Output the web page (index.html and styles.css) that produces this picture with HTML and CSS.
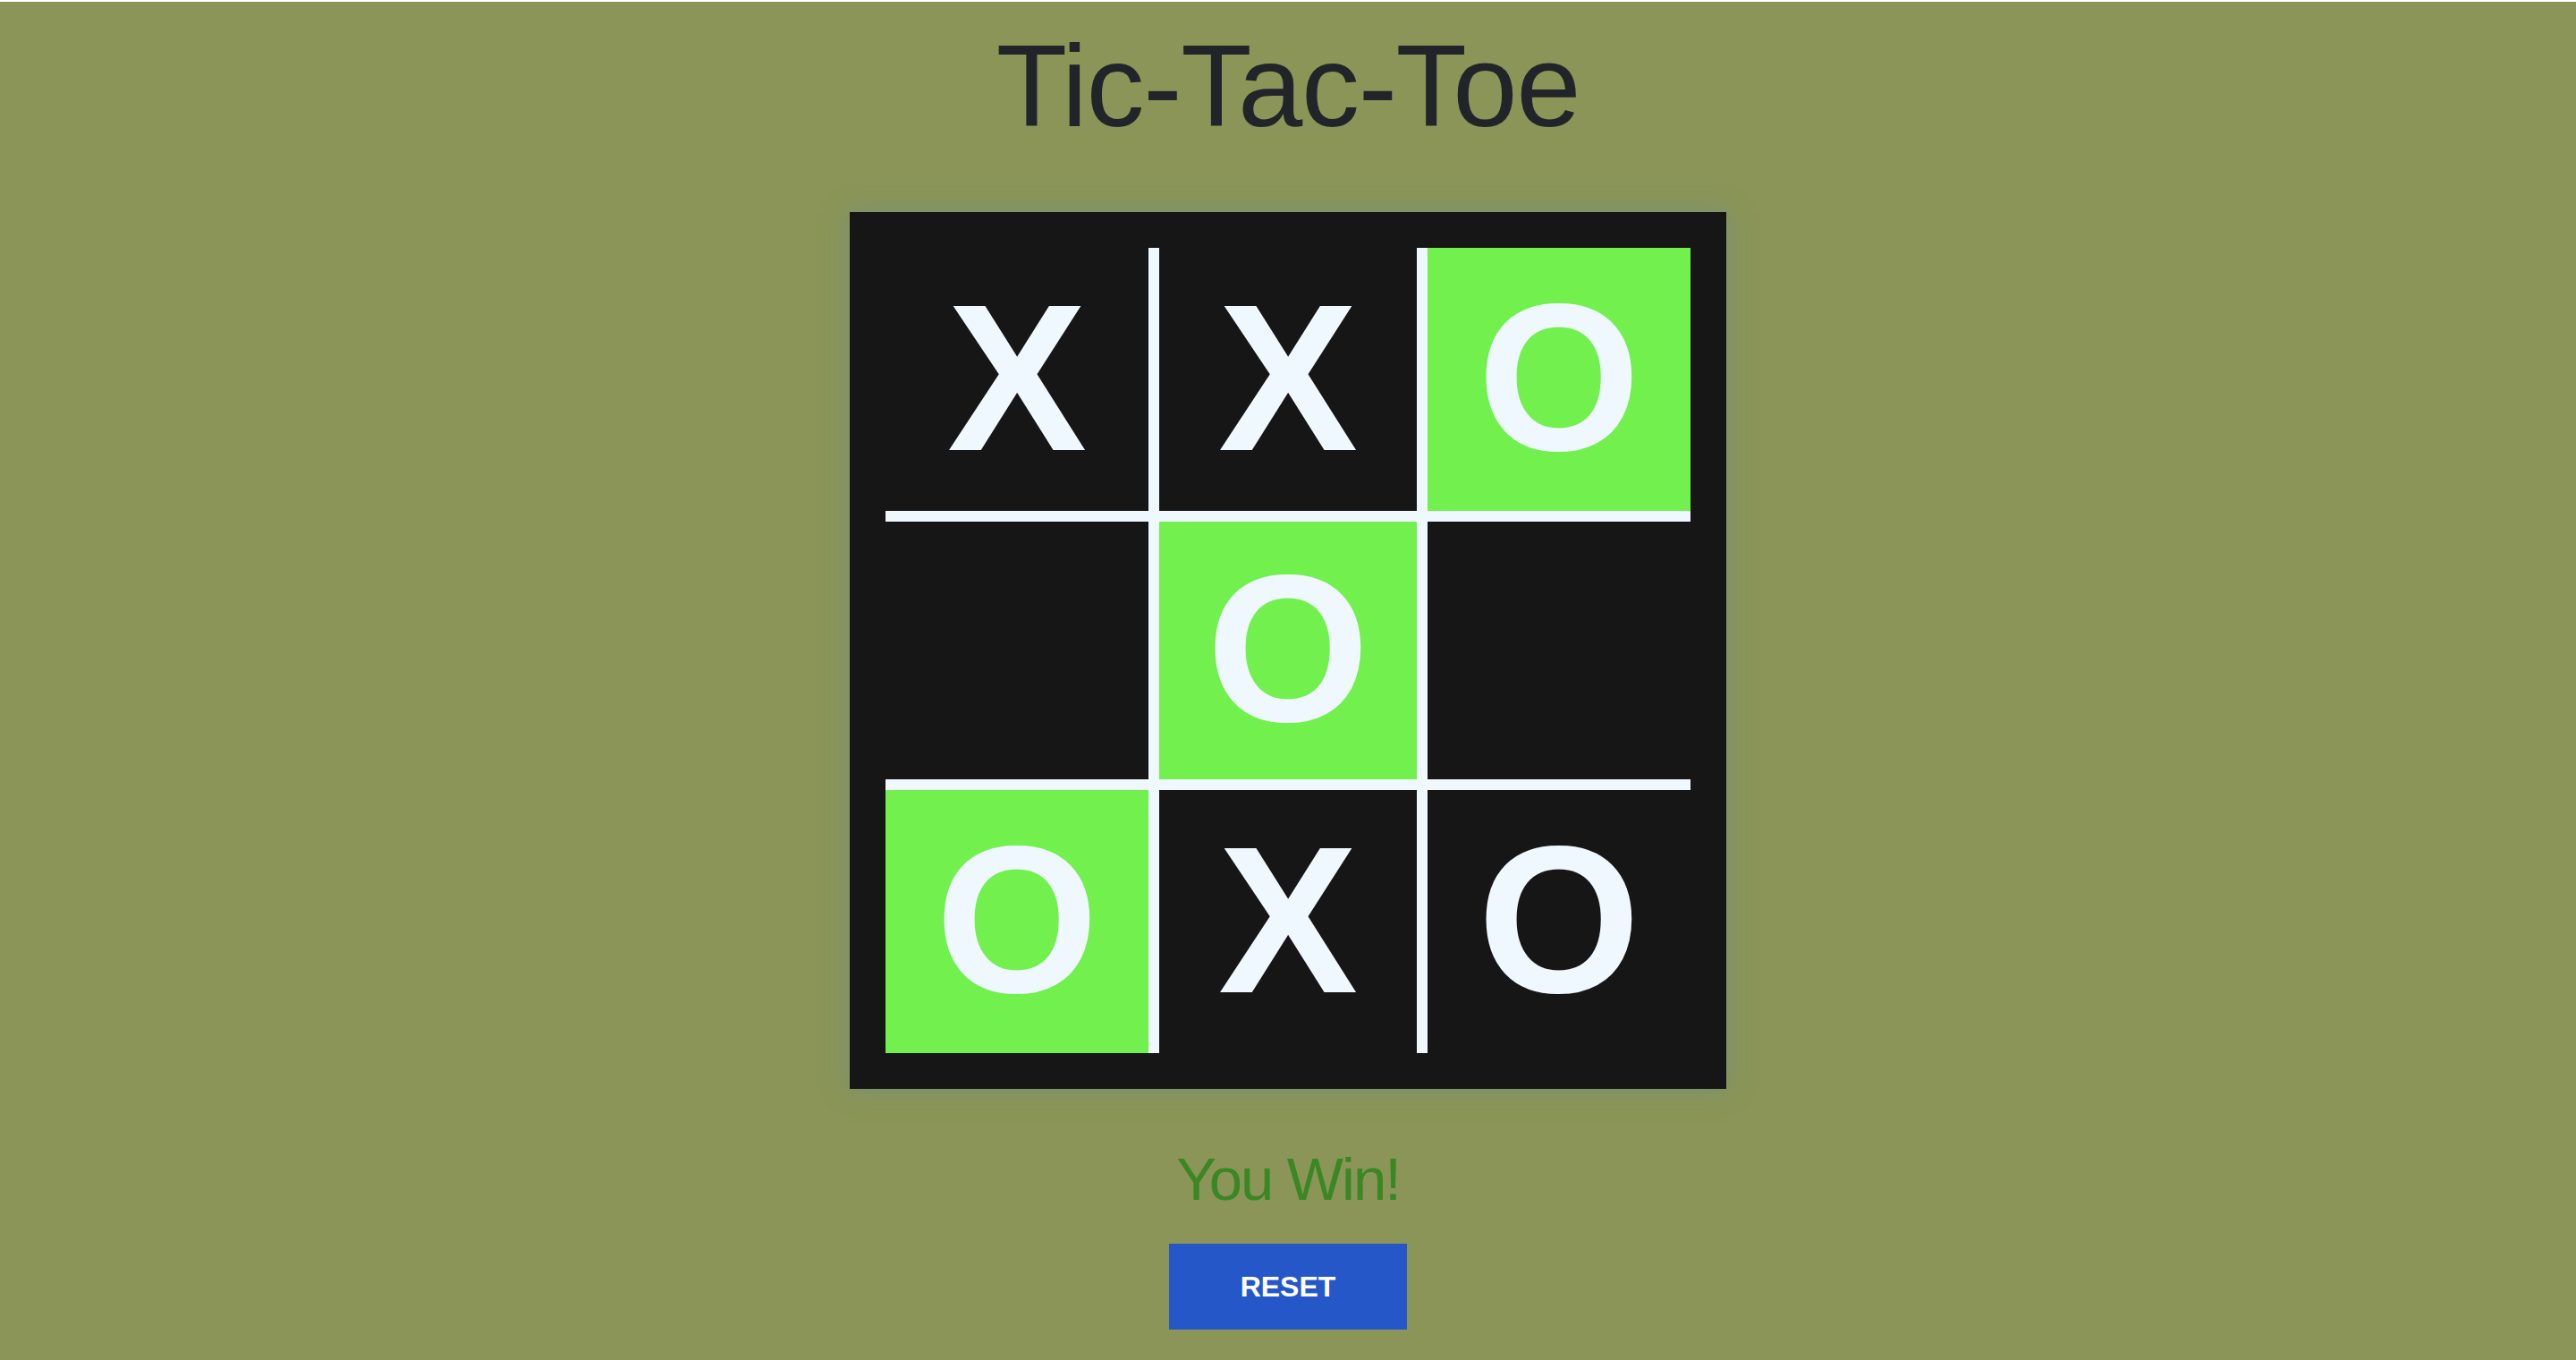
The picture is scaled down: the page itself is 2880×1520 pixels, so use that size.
FILE: index.html
```html
<!DOCTYPE html>
<html lang="en">
<head>
<meta charset="utf-8">
<title>Tic-Tac-Toe</title>
<link rel="stylesheet" href="styles.css">
</head>
<body>
<main class="game">
  <h1 class="title">Tic-Tac-Toe</h1>
  <div class="board">
    <div class="cell c0">X</div>
    <div class="cell c1">X</div>
    <div class="cell c2 win">O</div>
    <div class="cell c3"></div>
    <div class="cell c4 win">O</div>
    <div class="cell c5"></div>
    <div class="cell c6 win">O</div>
    <div class="cell c7">X</div>
    <div class="cell c8">O</div>
  </div>
  <p class="status">You Win!</p>
  <button class="reset" type="button">RESET</button>
</main>
</body>
</html>
```

FILE: styles.css
```css
html {
  background: #ffffff;
}

body {
  margin: 0;
  min-height: 1518px;
  border-top: 2px solid #ffffff;
  background: #8a9557;
  font-family: "Liberation Sans", Arial, sans-serif;
}

.game {
  display: flex;
  flex-direction: column;
  align-items: center;
}

.title {
  margin: 29px 0 0;
  font-size: 130px;
  line-height: 1;
  font-weight: 400;
  letter-spacing: -1.3px;
  color: #212529;
}

.board {
  margin-top: 76px;
  padding: 40px;
  background: #161616;
  display: grid;
  grid-template-columns: repeat(3, 300px);
  grid-template-rows: repeat(3, 300px);
  box-shadow: 0 0 26px rgba(112, 140, 150, 0.55);
}

.cell {
  box-sizing: border-box;
  display: flex;
  align-items: center;
  justify-content: center;
  padding-bottom: 4px;
  font-size: 234px;
  line-height: 1;
  font-weight: 700;
  color: #f0f8ff;
  border: 0 solid #f0f8ff;
}

.cell.win {
  background: #72f04e;
}

.c0 { border-right-width: 6px; border-bottom-width: 6px; }
.c1 { border-left-width: 6px; border-right-width: 6px; border-bottom-width: 6px; }
.c2 { border-left-width: 6px; border-bottom-width: 6px; }
.c3 { border-top-width: 6px; border-right-width: 6px; border-bottom-width: 6px; }
.c4 { border-width: 6px; }
.c5 { border-top-width: 6px; border-left-width: 6px; border-bottom-width: 6px; }
.c6 { border-top-width: 6px; border-right-width: 6px; }
.c7 { border-top-width: 6px; border-left-width: 6px; border-right-width: 6px; }
.c8 { border-top-width: 6px; border-left-width: 6px; }

.status {
  margin: 67px 0 0;
  font-size: 67px;
  line-height: 1;
  letter-spacing: -2px;
  color: #3a8723;
}

.reset {
  margin-top: 39px;
  width: 266px;
  height: 96px;
  border: 0;
  border-radius: 0;
  padding: 0;
  background: #2557c9;
  color: #ffffff;
  font-family: "Liberation Sans", Arial, sans-serif;
  font-size: 32px;
  font-weight: 700;
}
```
